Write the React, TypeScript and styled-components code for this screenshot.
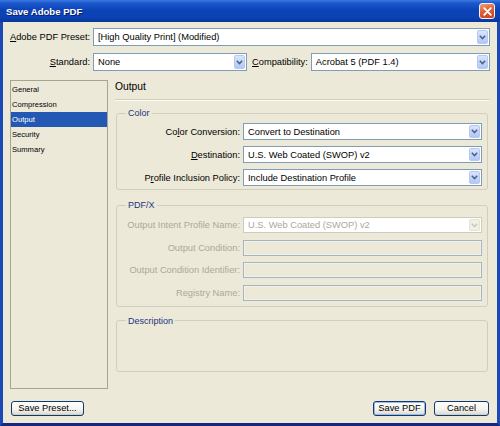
import React from "react";
import styled, { createGlobalStyle } from "styled-components";

const Global = createGlobalStyle`
  html, body { margin: 0; padding: 0; background: #ECE9D8; }
  body { font-family: "Liberation Sans", Arial, sans-serif; }
  * { box-sizing: border-box; }
`;

const Window = styled.div`
  width: 500px;
  height: 426px;
  display: flex;
  flex-direction: column;
  overflow: hidden;
  background: #0b3fb0;
`;

const TitleBar = styled.div`
  height: 22px;
  flex: none;
  display: flex;
  align-items: center;
  justify-content: space-between;
  padding: 0 5px 0 6px;
  background: linear-gradient(
    180deg,
    #3d7ae2 0%,
    #1b58cc 14%,
    #0c44b8 45%,
    #0b42b3 80%,
    #0a3699 100%
  );
`;

const Title = styled.span`
  color: #fff;
  font-weight: bold;
  font-size: 9.6px;
  text-shadow: 1px 1px 0 #0a1e6a;
`;

const CloseButton = styled.div`
  width: 16px;
  height: 16px;
  border: 1px solid #f4f4f4;
  border-radius: 3px;
  background: linear-gradient(160deg, #f0a07c 0%, #e06038 45%, #c9401c 100%);
  display: flex;
  align-items: center;
  justify-content: center;
`;

const Frame = styled.div`
  flex: 1;
  display: flex;
  flex-direction: column;
  background: #ece9d8;
  border-left: 3px solid #1c49b8;
  border-right: 3px solid #1c49b8;
  border-bottom: 3px solid #16287e;
  padding: 6px 7px 7px 7px;
`;

const PresetRow = styled.div`
  display: grid;
  grid-template-columns: 80px 1fr;
  column-gap: 3px;
  align-items: center;
  height: 18px;
`;

const StandardRow = styled.div`
  margin-top: 7px;
  display: grid;
  grid-template-columns: 80px 154px auto 1fr;
  column-gap: 3px;
  align-items: center;
  height: 18px;
`;

const Label = styled.label<{ $disabled?: boolean; $indent?: number }>`
  font-size: 9.3px;
  color: ${(p) => (p.$disabled ? "#aca899" : "#000")};
  text-align: right;
  white-space: nowrap;
  margin-left: ${(p) => p.$indent ?? 0}px;
`;

const SelectBox = styled.div<{ $h: number; $disabled?: boolean }>`
  height: ${(p) => p.$h}px;
  border: 1px solid ${(p) => (p.$disabled ? "#cfcbbd" : "#7f9db9")};
  background: #fff;
  display: flex;
  align-items: center;
  padding: 1px;
  min-width: 0;
`;

const SelectText = styled.span<{ $disabled?: boolean }>`
  flex: 1;
  padding-left: 3px;
  font-size: 9.3px;
  color: ${(p) => (p.$disabled ? "#aca899" : "#000")};
  white-space: nowrap;
  overflow: hidden;
`;

const ArrowButton = styled.span<{ $disabled?: boolean }>`
  width: 11px;
  align-self: stretch;
  border-radius: 2px;
  border: 1px solid ${(p) => (p.$disabled ? "#e4e1d5" : "#b5c8f2")};
  background: ${(p) =>
    p.$disabled
      ? "#f1efe6"
      : "linear-gradient(180deg, #dae5fd 0%, #c3d4fa 55%, #b3c7f3 100%)"};
  display: flex;
  align-items: center;
  justify-content: center;
`;

const Main = styled.div`
  margin-top: 9px;
  height: 309px;
  display: grid;
  grid-template-columns: 98px 1fr;
  column-gap: 7px;
`;

const NavList = styled.ul`
  margin: 0;
  padding: 1px 0 0 0;
  list-style: none;
  border: 1px solid #a7a490;
  background: #ece9d8;
`;

const NavItem = styled.li<{ $selected?: boolean }>`
  height: 15px;
  line-height: 15px;
  font-size: 7.6px;
  padding-left: 1px;
  color: ${(p) => (p.$selected ? "#fff" : "#000")};
  background: ${(p) => (p.$selected ? "#2359b5" : "transparent")};
`;

const Panel = styled.div`
  display: flex;
  flex-direction: column;
  min-width: 0;
`;

const PanelHeader = styled.div`
  height: 14px;
  line-height: 14px;
  font-size: 10.3px;
  color: #000;
`;

const Separator = styled.div`
  margin-top: 5px;
  height: 2px;
  border-top: 1px solid #d2cebb;
  border-bottom: 1px solid #fbfaf6;
`;

const Group = styled.fieldset<{ $mt: number; $pt: number; $pb: number }>`
  margin: ${(p) => p.$mt}px 2px 0 1px;
  padding: ${(p) => p.$pt}px 5px ${(p) => p.$pb}px 0;
  border: 1px solid #d0cebf;
  border-radius: 3px;
  min-width: 0;
`;

const Legend = styled.legend`
  margin-left: 9px;
  padding: 0 2px;
  font-size: 9px;
  line-height: 12px;
  color: #22347f;
`;

const FieldGrid = styled.div<{ $gap: number }>`
  display: grid;
  grid-template-columns: 123px 1fr;
  column-gap: 3px;
  row-gap: ${(p) => p.$gap}px;
  align-items: center;
`;

const DisabledInput = styled.div`
  height: 16px;
  border: 1px solid #a5b6c3;
  background: #ece9d8;
  box-shadow: inset 0 0 0 1px #f3f1e7;
`;

const DescriptionBody = styled.div`
  height: 44px;
`;

const ButtonRow = styled.div`
  margin-top: 12px;
  height: 15px;
  display: flex;
  justify-content: space-between;
  padding: 0 1px;
`;

const ButtonGroup = styled.div`
  display: flex;
  gap: 8px;
`;

const Button = styled.button<{ $w: number; $default?: boolean }>`
  width: ${(p) => p.$w}px;
  height: 15px;
  padding: 0;
  font-family: "Liberation Sans", Arial, sans-serif;
  font-size: 9.3px;
  line-height: 13px;
  color: #000;
  border: 1px solid #0f3a6e;
  border-radius: 3px;
  background: linear-gradient(180deg, #ffffff 0%, #f5f4ef 55%, #dcd8cc 100%);
  box-shadow: ${(p) =>
    p.$default ? "inset 0 0 0 1px #9fb8e6" : "inset 0 -1px 0 #d3cec2"};
`;

const Chevron: React.FC<{ color: string }> = ({ color }) => (
  <svg width="7" height="5" viewBox="0 0 7 5">
    <polyline
      points="0.8,0.8 3.5,3.6 6.2,0.8"
      fill="none"
      stroke={color}
      strokeWidth="1.5"
    />
  </svg>
);

const Select: React.FC<{ value: string; h?: number; disabled?: boolean }> = ({
  value,
  h = 18,
  disabled,
}) => (
  <SelectBox $h={h} $disabled={disabled}>
    <SelectText $disabled={disabled}>{value}</SelectText>
    <ArrowButton $disabled={disabled}>
      <Chevron color={disabled ? "#cdc9b9" : "#4d6185"} />
    </ArrowButton>
  </SelectBox>
);

const navItems = ["General", "Compression", "Output", "Security", "Summary"];

export default function App() {
  return (
    <>
      <Global />
      <Window>
        <TitleBar>
          <Title>Save Adobe PDF</Title>
          <CloseButton>
            <svg width="9" height="9" viewBox="0 0 9 9">
              <path
                d="M1.2 1.2 L7.8 7.8 M7.8 1.2 L1.2 7.8"
                stroke="#fff"
                strokeWidth="1.8"
                strokeLinecap="round"
              />
            </svg>
          </CloseButton>
        </TitleBar>
        <Frame>
          <PresetRow>
            <Label>
              <u>A</u>dobe PDF Preset:
            </Label>
            <Select value="[High Quality Print] (Modified)" />
          </PresetRow>
          <StandardRow>
            <Label>
              <u>S</u>tandard:
            </Label>
            <Select value="None" />
            <Label $indent={2}>
              <u>C</u>ompatibility:
            </Label>
            <Select value="Acrobat 5 (PDF 1.4)" />
          </StandardRow>
          <Main>
            <NavList>
              {navItems.map((n) => (
                <NavItem key={n} $selected={n === "Output"}>
                  {n}
                </NavItem>
              ))}
            </NavList>
            <Panel>
              <PanelHeader>Output</PanelHeader>
              <Separator />
              <Group $mt={6} $pt={4} $pb={3}>
                <Legend>Color</Legend>
                <FieldGrid $gap={6}>
                  <Label>
                    Co<u>l</u>or Conversion:
                  </Label>
                  <Select h={17} value="Convert to Destination" />
                  <Label>
                    <u>D</u>estination:
                  </Label>
                  <Select h={17} value="U.S. Web Coated (SWOP) v2" />
                  <Label>
                    P<u>r</u>ofile Inclusion Policy:
                  </Label>
                  <Select h={17} value="Include Destination Profile" />
                </FieldGrid>
              </Group>
              <Group $mt={9} $pt={6} $pb={5}>
                <Legend>PDF/X</Legend>
                <FieldGrid $gap={6.6}>
                  <Label $disabled>Output Intent Profile Name:</Label>
                  <Select h={16} disabled value="U.S. Web Coated (SWOP) v2" />
                  <Label $disabled>Output Condition:</Label>
                  <DisabledInput />
                  <Label $disabled>Output Condition Identifier:</Label>
                  <DisabledInput />
                  <Label $disabled>Registry Name:</Label>
                  <DisabledInput />
                </FieldGrid>
              </Group>
              <Group $mt={8} $pt={0} $pb={0}>
                <Legend>Description</Legend>
                <DescriptionBody />
              </Group>
            </Panel>
          </Main>
          <ButtonRow>
            <Button $w={73}>Save Preset...</Button>
            <ButtonGroup>
              <Button $w={53} $default>
                Save PDF
              </Button>
              <Button $w={55}>Cancel</Button>
            </ButtonGroup>
          </ButtonRow>
        </Frame>
      </Window>
    </>
  );
}
